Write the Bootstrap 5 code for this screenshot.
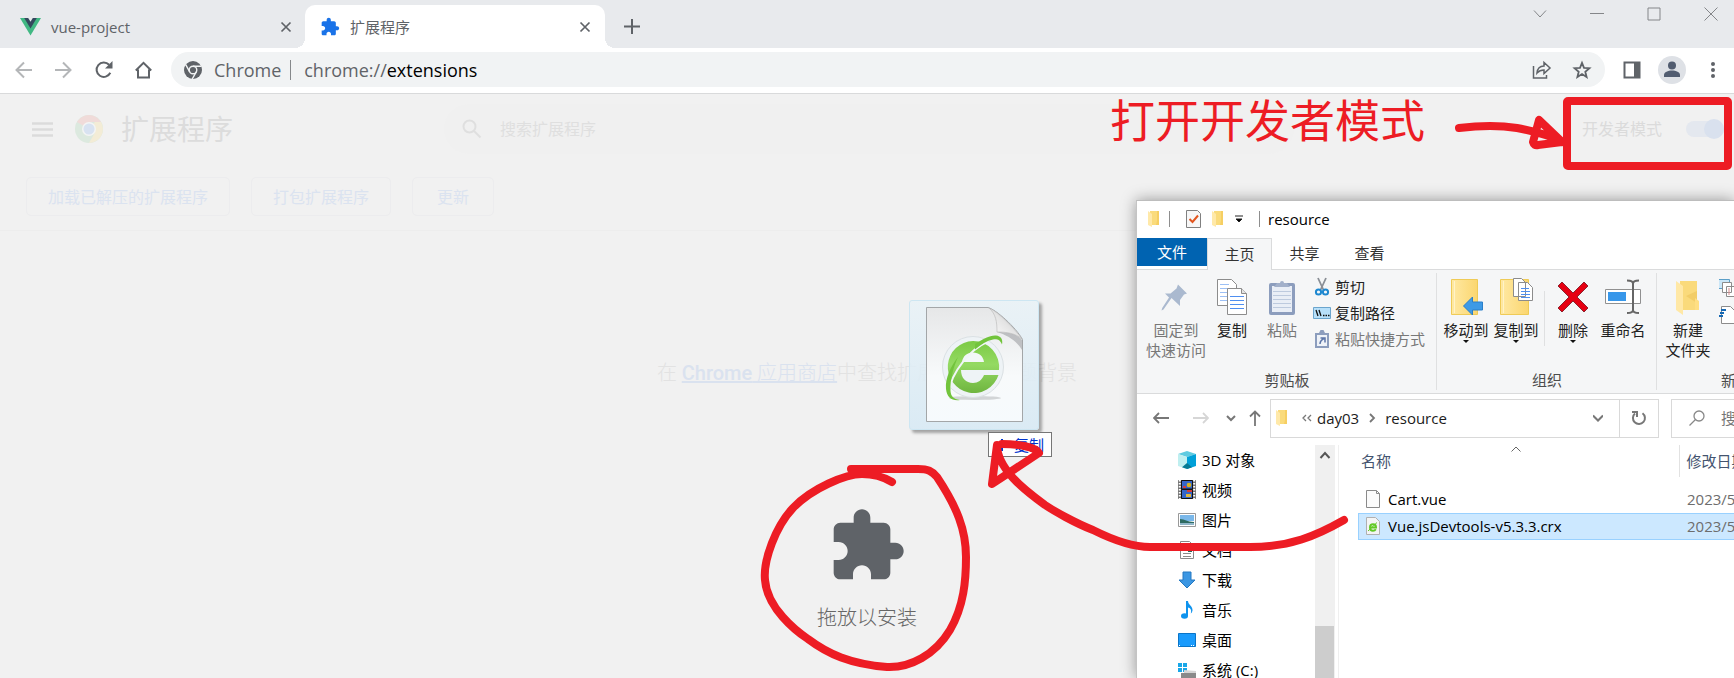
<!DOCTYPE html>
<html lang="zh-CN">
<head>
<meta charset="utf-8">
<meta name="viewport" content="width=device-width, initial-scale=1">
<title>扩展程序</title>
<link href="https://cdn.jsdelivr.net/npm/bootstrap@5.3.0/dist/css/bootstrap.min.css" rel="stylesheet">
<style>
  :root { --ui: "Open Sans", "Noto Sans CJK SC", sans-serif; --red: #ed1c24; }
  body { font-family: var(--ui); font-size: 15px; line-height: 20px; background: #f1f1f1; color: #000; }
  svg { display: block; flex: none; }
  button { font: inherit; }
  .plain { background: none; border: 0; padding: 0; color: inherit; }

  /* browser frame */
  .tabstrip { height: 48px; background: #e8eaed; color: #5f6368; }
  .tab { height: 43px; padding: 0 20px; gap: 10px; }
  .tab-idle { width: 305px; padding-right: 13px; }
  .tab-on { width: 300px; padding: 0 14px 0 15px; background: #fff; border-radius: 10px 10px 0 0; position: relative; }
  .tab-on::before, .tab-on::after { content: ""; position: absolute; bottom: 0; width: 10px; height: 10px; }
  .tab-on::before { left: -10px; background: radial-gradient(circle at 0 0, transparent 10px, #fff 10px); }
  .tab-on::after { right: -10px; background: radial-gradient(circle at 100% 0, transparent 10px, #fff 10px); }
  .newtab { margin-left: 19px; height: 43px; }
  .winbtns { height: 28px; gap: 43px; padding-right: 16px; color: #848689; }
  .toolbar { height: 46px; background: #fff; border-bottom: 1px solid #d9dadb; color: #5f6368; padding: 0 14px 2px; }
  .omnibox { height: 35px; border-radius: 18px; background: #f1f3f4; font-size: 18px; padding: 0 13px; margin: 0 17px; }
  .omnibox .url { width: 100%; min-width: 0; font-size: 18px; }
  .omnibar { width: 1px; height: 20px; background: #85888b; margin: 0 9px; }
  .avatar { width: 28px; height: 28px; border-radius: 50%; background: #dee1e6; color: #515c70; }

  /* extensions page, dimmed while a file is dragged over it */
  .ext-head { height: 70px; color: #dcdcdc; }
  .ext-side { flex: 1 1 0; }
  .ext-head h1 { font-size: 28px; line-height: 36px; font-weight: 400; margin: 0 0 0 18px; }
  .ext-logo { margin-left: 22px; }
  .ext-search { width: 850px; height: 50px; border-radius: 25px; background: #f0f0f0; padding-left: 18px; color: #dfdfdf; margin-right: 10px; }
  .ext-search input { background: none; border: 0; color: #dfdfdf; font-size: 16px; outline: 0; }
  .ext-search input::placeholder { color: #dfdfdf; opacity: 1; }
  .dev { font-size: 16px; color: #dbdbdb; padding-right: 10px; }
  .dev .form-check-input { width: 38px; height: 16px; margin: 0; border: 0; background: #e4e8ef; position: relative; opacity: 1; }
  .knob { position: relative; }
  .knob::after { content: ""; position: absolute; right: 0; top: 50%; width: 20px; height: 20px; margin-top: -10px; border-radius: 50%; background: #d9e1ee; pointer-events: none; }
  .ext-actions { height: 67px; border-bottom: 1px solid #ededed; padding: 13px 26px; gap: 21px; }
  .ext-actions button { height: 39px; border: 1px solid #ececee; border-radius: 5px; color: #dbe3f0; font-size: 16px; padding: 0 21px; background: none; }
  .ext-actions .narrow { padding: 0 24px; }
  .hint { margin-top: 130px; font: 20px/24px Roboto, "Noto Sans CJK SC", sans-serif; font-weight: 300; color: #e2e2e2; }
  .hint a { color: #dae2ef; }
  .hint b { font-weight: 500; }
  .drop-icon { margin-top: 121px; color: #5f6368; }
  .drop-label { margin-top: 20px; font-size: 20px; line-height: 24px; font-weight: 300; color: #666; }

  /* file window */
  .explorer { position: absolute; top: 200px; right: 0; bottom: 0; width: 598px; background: #fff; border-left: 1px solid #c4c4c4; border-top: 1px solid #bdbdbd; box-shadow: 0 0 14px rgba(0,0,0,.38); overflow: hidden; }
  .ex-title { height: 38px; padding-left: 10px; }
  .bar { width: 1px; height: 16px; background: #8e8e8e; }
  .ex-tabs { height: 31px; }
  .ex-tabs button { width: 65px; height: 31px; color: #333; position: relative; }
  .ex-tabs .file { width: 70px; height: 28px; background: #0063b1; color: #fff; }
  .ex-tabs .on { background: #f5f6f7; border: 1px solid #dadbdc; border-bottom: 0; height: 32px; z-index: 1; }
  .ribbon { height: 125px; background: #f5f6f7; border: solid #dadbdc; border-width: 1px 0; }
  .rgroup { position: relative; flex: none; padding-top: 1px; }
  .rgroup:not(:last-child)::after { content: ""; position: absolute; right: 0; top: 3px; bottom: 3px; width: 1px; background: #dfe0e1; }
  .rlabel { padding-bottom: 3px; color: #4c4c4c; }
  .big { width: 50px; padding-top: 7px; color: #222; white-space: nowrap; display: flex; flex-direction: column; align-items: center; }
  .big svg:first-child { margin-bottom: 4px; }
  .wide { width: 62px; }
  .off { color: #787878; }
  .smalls { margin-left: 6px; padding-top: 3px; }
  .small-row { height: 26px; gap: 4px; display: flex; align-items: center; color: #222; white-space: nowrap; }
  .small-row.off { color: #787878; }
  .midbar { width: 1px; height: 55px; margin: 20px 3px 0; background: #dfe0e1; }
  .ex-nav { height: 51px; padding: 0 0 2px 16px; color: #777; }
  .crumbs { width: 389px; height: 39px; border: 1px solid #d9d9d9; color: #1b1b1b; flex: none; margin: 0 12px 0 9px; }
  .refresh { width: 39px; height: 37px; border-left: 1px solid #d9d9d9; color: #777; }
  .find { width: 130px; height: 39px; border: 1px solid #d9d9d9; color: #777; padding-left: 17px; flex: none; }
  .find input { border: 0; width: 90px; padding: 0; background: none; outline: 0; color: #777; }
  .find input::placeholder { color: #777; opacity: 1; }
  .tree { width: 178px; flex: none; overflow: hidden; }
  .tree a { height: 30px; padding-left: 41px; gap: 6px; color: #000; text-decoration: none; white-space: nowrap; }
  .scroller { width: 20px; background: #f0f0f0; flex: none; }
  .scroller .thumb { height: 52px; width: 19px; background: #cdcdcd; }
  .files { position: relative; border-left: 1px solid #efefef; margin-left: 3px; padding-left: 19px; overflow: hidden; }
  .files table { width: 480px; table-layout: fixed; border-collapse: collapse; }
  .files th { font-weight: 400; color: #44546f; height: 32px; padding: 0 0 0 3px; vertical-align: middle; position: relative; }
  .files th + th { border-left: 1px solid #e2e2e2; padding-left: 7px; }
  .files td { height: 27px; padding: 0 0 0 8px; white-space: nowrap; vertical-align: middle; color: #6d6d6d; }
  .files td:first-child { color: #000; }
  .files .sel { background: #cce8ff; outline: 1px solid #99d1ff; outline-offset: -1px; }
  .files .gap-row td { height: 9px; padding: 0; }
  .sort { position: absolute; top: 0; left: 171px; color: #666; }

  /* dragged item and hand-drawn notes */
  .ghost { position: absolute; left: 909px; top: 300px; width: 130px; height: 130px; background: linear-gradient(rgba(232,242,247,.8), rgba(216,234,245,.9)); border: 1px solid #cde6f2; border-radius: 3px; box-shadow: 3px 3px 3px rgba(0,0,0,.32); }
  .tip { position: absolute; left: 988px; top: 432px; width: 64px; height: 25px; border: 1px solid #767676; background: #fff; color: #0033cc; gap: 6px; }
  .note { position: absolute; top: 91px; right: 309px; font-size: 45px; line-height: 60px; color: var(--red); white-space: nowrap; }
  .ink { position: absolute; inset: 0 auto auto 0; width: 100%; height: auto; pointer-events: none; fill: none; stroke: var(--red); stroke-width: 8; stroke-linecap: round; stroke-linejoin: round; }
</style>
</head>
<body class="vh-100 overflow-hidden position-relative d-flex flex-column">

<svg width="0" height="0" class="position-absolute" aria-hidden="true">
  <defs>
    <linearGradient id="gfold" x1="0" x2="1"><stop offset="0" stop-color="#ffe9a4"/><stop offset="1" stop-color="#fbd66f"/></linearGradient>
    <linearGradient id="ggreen" x1="0" x2="0" y1="0" y2="1"><stop offset="0" stop-color="#7cca45"/><stop offset=".45" stop-color="#94da62"/><stop offset="1" stop-color="#6fb540"/></linearGradient>
    <linearGradient id="gpage" x1="0" x2="0" y1="0" y2="1"><stop offset="0" stop-color="#e6e7e8"/><stop offset=".6" stop-color="#f8fafb"/><stop offset="1" stop-color="#f6fafd"/></linearGradient>
    <linearGradient id="gcurl" x1="0" y1="1" x2="1" y2="0"><stop offset="0" stop-color="#fff"/><stop offset=".5" stop-color="#e4e4e4"/><stop offset="1" stop-color="#9a9a9a"/></linearGradient>
  </defs>
  <symbol id="puzzle" viewBox="0 0 24 24"><path fill="currentColor" d="M20.5 11H19V7c0-1.1-.9-2-2-2h-4V3.5C13 2.12 11.88 1 10.5 1S8 2.12 8 3.5V5H4c-1.1 0-1.99.9-1.99 2v3.8H3.5c1.49 0 2.7 1.21 2.7 2.7s-1.21 2.7-2.7 2.7H2V20c0 1.1.9 2 2 2h3.8v-1.5c0-1.49 1.21-2.7 2.7-2.7s2.7 1.21 2.7 2.7V22H17c1.1 0 2-.9 2-2v-4h1.5c1.38 0 2.5-1.12 2.5-2.5S21.88 11 20.5 11z"/></symbol>
  <symbol id="cross" viewBox="0 0 12 12"><path d="M1.5 1.5l9 9M10.5 1.5l-9 9" stroke="currentColor" stroke-width="1.7"/></symbol>
  <symbol id="folder" viewBox="0 0 14 18"><path fill="#fadb7c" d="M3 1h9v14H3z"/><path fill="#ffe9a9" d="M1 1l4 3v13l-4-2z"/><path fill="#f6cf63" d="M10 1h2v14h-3l1-4z"/></symbol>
  <symbol id="sheets" viewBox="0 0 32 38"><path fill="#fff" stroke="#8c8c8c" d="M1.500 1.500h14l5 5v21h-19z"/><path stroke="#9dc0f5" d="M4 6.500h9M4 10.500h12M4 14.500h12M4 18.500h12M4 22.500h12"/><path fill="#fff" stroke="#8c8c8c" d="M11.500 10.500h14l5 5v21h-19z"/><path fill="#e4e4e4" stroke="#8c8c8c" d="M25.500 10.500v5h5"/><path stroke="#4f8ff0" d="M14 18.500h14M14 22.500h14M14 26.500h14M14 30.500h14"/></symbol>
  <symbol id="caret" viewBox="0 0 6 3"><path fill="#111" d="M0 0h6L3 3z"/></symbol>
</svg>

<header>
  <div class="tabstrip d-flex align-items-end">
    <div class="tab tab-idle d-flex align-items-center">
      <svg width="21" height="19" viewBox="0 0 21 19"><path fill="#41b883" d="M0 1h21L10.500 18.500z"/><path fill="#34495e" d="M4.200 1h12.600L10.500 11.500z"/><path fill="#e8eaed" d="M8.200 1h4.600L10.500 4.800z"/></svg>
      <span class="flex-grow-1">vue-project</span>
      <button class="plain" aria-label="关闭 vue-project"><svg width="12" height="12"><use href="#cross"/></svg></button>
    </div>
    <div class="tab tab-on d-flex align-items-center">
      <svg width="20" height="20" color="#1a73e8"><use href="#puzzle"/></svg>
      <span class="flex-grow-1">扩展程序</span>
      <button class="plain" aria-label="关闭 扩展程序"><svg width="12" height="12"><use href="#cross"/></svg></button>
    </div>
    <button class="plain newtab" aria-label="新标签页"><svg width="16" height="16" viewBox="0 0 16 16"><path d="M8 0v15M0 7.500h16" stroke="#5f6368" stroke-width="2"/></svg></button>
    <div class="winbtns d-flex align-items-center ms-auto align-self-start">
      <button class="plain" aria-label="搜索标签页"><svg width="14" height="14" viewBox="0 0 14 14"><path d="M1 3.500l6 6.500 6-6.500" fill="none" stroke="currentColor"/></svg></button>
      <button class="plain" aria-label="最小化"><svg width="14" height="14"><path d="M0 6.500h14" stroke="currentColor"/></svg></button>
      <button class="plain" aria-label="最大化"><svg width="14" height="14"><path d="M1 1h12v12H1z" fill="none" stroke="currentColor"/></svg></button>
      <button class="plain" aria-label="关闭"><svg width="14" height="14"><path d="M.5.5l13 13M13.500.5l-13 13" stroke="currentColor"/></svg></button>
    </div>
  </div>

  <div class="toolbar d-flex align-items-center">
    <button class="plain" aria-label="后退"><svg width="20" height="20" viewBox="0 0 20 20" fill="none" stroke="#b4b6b8" stroke-width="2"><path d="M18 10H3M10 2.500L2.500 10l7.500 7.500"/></svg></button>
    <button class="plain ms-3 ps-1" aria-label="前进"><svg width="20" height="20" viewBox="0 0 20 20" fill="none" stroke="#b4b6b8" stroke-width="2"><path d="M1 10h15M9 2.500l7.500 7.500L9 17.500"/></svg></button>
    <button class="plain ms-3 ps-1" aria-label="重新加载"><svg width="20" height="20" viewBox="0 0 20 20"><path d="M16.300 12.800a7.200 7.200 0 1 1-1.200-8" fill="none" stroke="#5f6368" stroke-width="2"/><path d="M18.500 1v7.500H11z" fill="#5f6368"/></svg></button>
    <button class="plain ms-3 ps-1" aria-label="主页"><svg width="20" height="20" viewBox="0 0 20 20"><path d="M1.800 10.500L9.500 2.800l7.700 7.700M4 9.500V17.500h11V9.500" fill="none" stroke="#5f6368" stroke-width="2"/></svg></button>
    <div class="omnibox d-flex align-items-center flex-grow-1">
      <svg width="18" height="18" viewBox="0 0 18 18"><circle cx="9" cy="9" r="9" fill="#5f6368"/><circle cx="9" cy="9" r="3.800" fill="none" stroke="#f1f3f4" stroke-width="1.400"/><path d="M9 5.200h8.500M5.700 10.900L1.700 3.600M12.300 10.900L8.200 18" stroke="#f1f3f4" stroke-width="1.400"/></svg>
      <span class="ms-2 ps-1">Chrome</span>
      <span class="omnibar"></span>
      <div class="url flex-grow-1 ps-1">chrome://<span class="text-black">extensions</span></div>
      <button class="plain" aria-label="分享"><svg width="20" height="20" viewBox="0 0 20 20" fill="none" stroke="#5f6368" stroke-width="1.500"><path d="M1.500 6v12h13v-3M5 13c.5-5 3.500-7 7-7V2.500L18 8l-6 5.500V10c-3 0-5 .8-7 3z"/></svg></button>
      <button class="plain ms-3 ps-1" aria-label="收藏"><svg width="20" height="20" viewBox="0 0 20 20"><path fill="none" stroke="#5f6368" stroke-width="1.800" d="M10 2.800l2 5 5.400.4-4.100 3.500 1.300 5.300-4.600-2.900L5.400 17l1.300-5.300-4.100-3.500L8 7.800z"/></svg></button>
    </div>
    <button class="plain" aria-label="侧边栏"><svg width="20" height="20" viewBox="0 0 20 20"><path d="M2.500 2.500h15v15h-15z" fill="none" stroke="#5f6368" stroke-width="2"/><path fill="#5f6368" d="M12 2h6v16h-6z"/></svg></button>
    <button class="plain avatar ms-3 d-flex align-items-center justify-content-center" aria-label="个人资料"><svg width="16" height="17" viewBox="0 0 16 17" fill="currentColor"><circle cx="8" cy="4.500" r="4"/><path d="M0 16v-2c0-3 4-4.500 8-4.500s8 1.500 8 4.500v2z"/></svg></button>
    <button class="plain ms-3 ps-1" aria-label="菜单"><svg width="14" height="18" viewBox="0 0 14 18" fill="#5f6368"><circle cx="7" cy="3" r="2"/><circle cx="7" cy="9" r="2"/><circle cx="7" cy="15" r="2"/></svg></button>
  </div>
</header>

<main class="flex-grow-1">
  <div class="ext-head d-flex align-items-center">
    <div class="ext-side d-flex align-items-center ps-4">
      <button class="plain ms-2" aria-label="主菜单"><svg width="21" height="15" viewBox="0 0 21 15"><path d="M0 1.500h21M0 7.500h21M0 13.500h21" stroke="#dbdbdb" stroke-width="2.400"/></svg></button>
      <svg class="ext-logo" width="28" height="28" viewBox="0 0 28 28"><circle cx="14" cy="14" r="14" fill="#dce9df"/><path fill="#f0dbd9" d="M14 14L1.900 7A14 14 0 0 1 26.100 7L14 7z"/><path fill="#f3ecd6" d="M14 14l6-7h6.100A14 14 0 0 1 14 28l6-10.500z"/><circle cx="14" cy="14" r="7" fill="#f3f4f4"/><circle cx="14" cy="14" r="5.500" fill="#d8e2f1"/></svg>
      <h1>扩展程序</h1>
    </div>
    <label class="ext-search d-flex align-items-center">
      <svg width="20" height="20" viewBox="0 0 20 20" fill="none" stroke="currentColor" stroke-width="2"><circle cx="7.500" cy="7.500" r="6"/><path d="M12 12l6.500 6.500"/></svg>
      <input class="ms-3 w-50" type="search" placeholder="搜索扩展程序" aria-label="搜索扩展程序">
    </label>
    <div class="ext-side dev d-flex align-items-center justify-content-end">
      <label for="devmode" class="me-4">开发者模式</label>
      <span class="knob d-flex form-switch p-0"><input class="form-check-input" type="checkbox" role="switch" id="devmode"></span>
    </div>
  </div>
  <div class="ext-actions d-flex">
    <button type="button">加载已解压的扩展程序</button>
    <button type="button">打包扩展程序</button>
    <button type="button" class="narrow">更新</button>
  </div>
  <section class="d-flex flex-column align-items-center">
    <p class="hint mb-0">在 <a href="#"><b>Chrome</b> 应用商店</a>中查找扩展程序和主题背景</p>
    <svg class="drop-icon" width="80" height="80"><use href="#puzzle"/></svg>
    <p class="drop-label mb-0">拖放以安装</p>
  </section>
</main>

<section class="explorer d-flex flex-column" aria-label="resource">
  <div class="ex-title d-flex align-items-center">
    <svg width="14" height="18"><use href="#folder"/></svg>
    <span class="bar ms-2 me-3"></span>
    <svg width="15" height="18" viewBox="0 0 15 18"><path d="M.5.500h11l3 3v14H.5z" fill="#f7f7f7" stroke="#808080"/><path d="M3.500 9l3 3L12 5.500" fill="none" stroke="#e2561f" stroke-width="2"/></svg>
    <svg class="ms-2 me-2" width="18" height="18"><use href="#folder"/></svg>
    <svg class="me-3" width="8" height="8" viewBox="0 0 8 8"><path d="M0 1h8M1 4h6L4 7z" stroke="#222" stroke-width="1"/></svg>
    <span class="bar me-2"></span>
    <span>resource</span>
  </div>
  <div class="ex-tabs d-flex">
    <button class="plain file">文件</button>
    <button class="plain on">主页</button>
    <button class="plain">共享</button>
    <button class="plain">查看</button>
  </div>
  <div class="ribbon d-flex flex-shrink-0">
    <div class="rgroup d-flex flex-column" style="width:300px">
      <div class="d-flex ps-2">
        <button class="plain big wide off"><svg width="32" height="38" viewBox="0 0 32 38"><path fill="#aab9cf" d="M18 6.500l9 9-3 1-4 5.500v6L11.500 20 3.500 31.500l-2 1 .7-2.500L9 19.500l-4-4h5.500l6-5z"/></svg>固定到<br>快速访问</button>
        <button class="plain big"><svg width="32" height="38"><use href="#sheets"/></svg>复制</button>
        <button class="plain big off"><svg width="28" height="38" viewBox="0 0 28 38"><rect x="1" y="5" width="26" height="32" rx="2" fill="#8c9dbd"/><path fill="#e9eef6" d="M4 8h20v26H4z"/><path stroke="#bdcade" d="M5 13.500h18M5 17.500h18M5 21.500h18M5 25.500h18M5 29.500h18"/><path fill="#a2b0ca" d="M6 9l3-4h3a2 2 0 0 1 4 0h3l3 4z"/></svg>粘贴</button>
        <div class="smalls">
          <button class="plain small-row"><svg width="18" height="20" viewBox="0 0 18 20" fill="none"><path stroke="#8a8f96" stroke-width="1.800" d="M5 1l5.500 12M13 1L7.500 13"/><circle cx="5.500" cy="15" r="2.600" stroke="#1e88d0" stroke-width="2"/><circle cx="12.500" cy="15" r="2.600" stroke="#1e88d0" stroke-width="2"/></svg>剪切</button>
          <button class="plain small-row"><svg width="18" height="12" viewBox="0 0 18 12"><path fill="#b7e0fa" stroke="#6ba5cd" d="M.5.500h17v11H.5z"/><path stroke="#111" stroke-width="1.300" d="M3 3l2 6M6 3l2 6M10 8.500h1.500M12.500 8.500H14M15 8.500h1.500"/></svg>复制路径</button>
          <button class="plain small-row off"><svg width="18" height="20" viewBox="0 0 18 20"><path fill="#8c9dbd" d="M2 4h4l1.500-3h3L12 4h4v15H2z"/><path fill="#eef2f8" d="M4 6h10v11H4z"/><path stroke="#5d76a8" stroke-width="1.500" fill="none" d="M7 15c0-3 1-4 4-5.500M7.500 9H12v4.500"/></svg>粘贴快捷方式</button>
        </div>
      </div>
      <div class="rlabel mt-auto text-center">剪贴板</div>
    </div>
    <div class="rgroup d-flex flex-column" style="width:220px">
      <div class="d-flex ps-1">
        <button class="plain big"><svg width="34" height="38" viewBox="0 0 34 38"><path fill="url(#gfold)" stroke="#efcb57" d="M2.500 1.500h26v35h-26z"/><path stroke="#fff3c8" d="M5.500 3v32"/><path fill="#3e9ae6" stroke="#2a7fc9" d="M14.500 28l9-9v5h10v8h-10v5z"/></svg>移动到<svg width="6" height="3"><use href="#caret"/></svg></button>
        <button class="plain big"><svg width="34" height="38" viewBox="0 0 34 38"><path fill="url(#gfold)" stroke="#efcb57" d="M1.500 1.500h28v35h-28z"/><path stroke="#fff3c8" d="M4.500 3v32"/><path fill="#fff" stroke="#8c8c8c" d="M14.500.500h8l4 4v14h-12zM19.500 4.500h9l5 5v13h-14z"/><path stroke="#4f8ff0" d="M22 10.500h8M22 13.500h9M22 16.500h9M22 19.500h9"/></svg>复制到<svg width="6" height="3"><use href="#caret"/></svg></button>
        <span class="midbar"></span>
        <button class="plain big"><svg width="34" height="38" viewBox="0 0 34 38"><path fill="#e60012" stroke="#8d2530" d="M2 8l4-4 11 11L28 4l4 4-11 11 11 11-4 4-11-11L6 34l-4-4 11-11z"/></svg>删除<svg width="6" height="3"><use href="#caret"/></svg></button>
        <button class="plain big"><svg width="36" height="38" viewBox="0 0 36 38"><path fill="#fff" stroke="#909090" d="M.5 11.500h35v14H.5z"/><path fill="#3797ea" d="M3 14h18v9H3z"/><path fill="none" stroke="#666" stroke-width="2" d="M22 2.500c4 0 6 1 6 3 0-2 2-3 6-3M28 5v27M22 35c4 0 6-1 6-3 0 2 2 3 6 3"/></svg>重命名</button>
      </div>
      <div class="rlabel mt-auto text-center">组织</div>
    </div>
    <div class="rgroup d-flex flex-column" style="width:158px">
      <div class="d-flex">
        <button class="plain big wide"><svg width="28" height="38" viewBox="0 0 28 38"><path fill="#fada7b" d="M6 3h17v29H6z"/><path fill="#ffe8a6" d="M2 3l7 5v29l-7-5z"/><path fill="#e9bf55" d="M12 18l11-5v12z" opacity=".5"/><path fill="#ffdf83" d="M21 20l4 3v9h-4z"/></svg>新建<br>文件夹</button>
        <div class="d-flex flex-column gap-2 pt-2">
          <button class="plain" aria-label="新建项目"><svg width="20" height="18" viewBox="3 0 20 18"><path fill="#cbe7f8" stroke="#5b9fc8" d="M1.500.5h12v9h-12z"/><path fill="#fff" stroke="#8c8c8c" d="M6.500 3.500h9v10h-9zM10.500 7.500h8v10h-8z"/><path stroke="#d98b8b" d="M13 9v7"/></svg></button>
          <button class="plain" aria-label="轻松访问"><svg width="20" height="20" viewBox="3 0 20 20"><path fill="#fff" stroke="#8c8c8c" d="M5.500 1.500h9l4 4v13h-13z"/><path stroke="#1668b3" stroke-width="2" d="M5 5h5M4 8h4M3 11h4"/></svg></button>
        </div>
      </div>
      <div class="rlabel mt-auto text-center">新建</div>
    </div>
  </div>

  <div class="ex-nav d-flex align-items-center flex-shrink-0">
    <button class="plain" aria-label="返回"><svg width="16" height="16" viewBox="0 0 16 16" fill="none" stroke="#777" stroke-width="1.800"><path d="M16 8H1M6 3L1 8l5 5"/></svg></button>
    <button class="plain ms-4" aria-label="前进"><svg width="16" height="16" viewBox="0 0 16 16" fill="none" stroke="#d6d6d6" stroke-width="1.800"><path d="M0 8h15M10 3l5 5-5 5"/></svg></button>
    <button class="plain ms-3" aria-label="最近浏览的位置"><svg width="12" height="10" viewBox="2 0 12 10" fill="none" stroke="#777" stroke-width="2"><path d="M4 3l4 4 4-4"/></svg></button>
    <button class="plain ms-2 ps-1" aria-label="向上"><svg width="12" height="16" viewBox="0 0 12 16" fill="none" stroke="#777" stroke-width="1.800"><path d="M6 16V1M1 6.500l5-5 5 5"/></svg></button>
    <div class="crumbs d-flex align-items-center">
      <svg class="ms-1" width="14" height="18"><use href="#folder"/></svg>
      <svg class="ms-2 ps-1" width="16" height="8" viewBox="0 0 12 8" fill="none" stroke="#777" stroke-width="1.300"><path d="M5 1L2 4l3 3M10 1L7 4l3 3"/></svg>
      <span class="ms-1">day03</span>
      <svg class="mx-2" width="10" height="10" viewBox="0 0 10 10" fill="none" stroke="#777" stroke-width="1.800"><path d="M3 1l4 4-4 4"/></svg>
      <span>resource</span>
      <button class="plain ms-auto me-3" aria-label="以前的位置"><svg width="10" height="8" viewBox="0 0 10 8" fill="none" stroke="#777" stroke-width="2"><path d="M0 1.500l5 5 5-5"/></svg></button>
      <button class="plain refresh d-flex align-items-center justify-content-center" aria-label="刷新"><svg width="16" height="16" viewBox="0 0 16 16" fill="none" stroke="#777" stroke-width="2"><path d="M11.500 3.200A6 6 0 1 1 4 3.500M1 2h5v5"/></svg></button>
    </div>
    <label class="find d-flex align-items-center">
      <svg class="me-3" width="16" height="16" viewBox="0 0 16 16" fill="none" stroke="#888" stroke-width="1.300"><circle cx="10" cy="6" r="5"/><path d="M6.500 9.500L.5 15.500"/></svg>
      <input type="text" placeholder="搜索resource" aria-label="搜索">
    </label>
  </div>

  <div class="d-flex flex-grow-1 overflow-hidden">
    <nav class="tree" aria-label="位置">
      <a href="#" class="d-flex align-items-center"><svg width="18" height="18" viewBox="0 0 18 18"><path fill="#5fcbe0" d="M9 0l9 3-9 3-9-3z"/><path fill="#bfeff0" d="M0 3l9 3v12l-9-3z"/><path fill="#00a0d8" d="M18 3L9 6v12l9-3z"/><path fill="#067a94" d="M9 12l5 4.300L9 18l-5-1.700z"/></svg>3D 对象</a>
      <a href="#" class="d-flex align-items-center"><svg width="18" height="19" viewBox="0 0 18 19"><path fill="#777" d="M0 0h18v19H0z"/><path stroke="#fff" stroke-width="2" stroke-dasharray="1.500 1.500" d="M1.800 0v19M16.200 0v19"/><path fill="#3566c8" stroke="#111" d="M3.500.5h11v8.500h-11zM3.500 9.500h11v9h-11z"/><circle cx="11" cy="5" r="2.300" fill="#d8b41c"/><path fill="#d23d3a" d="M5 6h3v2H5zM9 10h5v2H9z"/><path fill="#e0b83a" d="M8 14h5v3H8z"/></svg>视频</a>
      <a href="#" class="d-flex align-items-center"><svg width="18" height="14" viewBox="0 0 18 14"><path fill="#fff" stroke="#999" d="M.5.500h17v13H.5z"/><path fill="#7ab8ea" d="M2 2h14v6H2z"/><path fill="#2e6b62" d="M2 6c5 0 7 3 14 3v1H2z"/><path fill="#8fb6c9" d="M2 10h14v2H2z"/></svg>图片</a>
      <a href="#" class="d-flex align-items-center"><svg width="18" height="18" viewBox="0 0 18 18"><path fill="#fff" stroke="#8a8a8a" d="M2.500.5h9l4 4v13h-13z"/><path stroke="#8a8a8a" d="M5 6.500h8M5 9.500h8M5 12.500h8M5 15.500h8"/><path fill="#276a5d" d="M10 9h4v2h-4z"/></svg>文档</a>
      <a href="#" class="d-flex align-items-center"><svg width="18" height="18" viewBox="0 0 18 18"><path fill="#3c97e3" stroke="#2479c2" d="M5 1h8v8h4l-8 8-8-8h4z"/></svg>下载</a>
      <a href="#" class="d-flex align-items-center"><svg width="18" height="18" viewBox="0 0 18 18"><ellipse cx="6.500" cy="15" rx="3.500" ry="2.800" fill="#0e93ee"/><path fill="#0e93ee" d="M8 0h2c0 4 5 5 4.500 9.500-.3 1.500-1 2.500-1.700 3 1.200-4-.8-5.500-2.800-6V15H8z"/></svg>音乐</a>
      <a href="#" class="d-flex align-items-center"><svg width="18" height="14" viewBox="0 0 18 14"><path fill="#1a9bfc" stroke="#0a75c8" d="M.5.500h17v13H.5z"/><path stroke="#fff" d="M1 12.500h2M13 12.500h3" stroke-dasharray="1 1"/></svg>桌面</a>
      <a href="#" class="d-flex align-items-center"><svg width="18" height="18" viewBox="0 0 18 18"><path fill="#18a7e8" d="M0 2h4v4H0zM5 2h4v4H5zM0 7h4v4H0zM5 7h4v4H5z"/><path fill="#d6d6d6" d="M6 9l12 1v3L6 13z"/><path fill="#8a8a8a" d="M3 12h15v5H3z"/></svg>系统 (C:)</a>
    </nav>
    <div class="scroller d-flex flex-column">
      <svg class="mx-auto mt-1" width="12" height="12" viewBox="0 0 12 12" fill="none" stroke="#555" stroke-width="2"><path d="M1.500 9L6 4l4.500 5"/></svg>
      <div class="thumb mt-auto"></div>
    </div>
    <div class="files flex-grow-1">
      <svg class="sort" width="12" height="8" viewBox="0 0 12 8" fill="none" stroke="currentColor"><path d="M1.500 6.500L6 2l4.500 4.500"/></svg>
      <table>
        <colgroup><col style="width:321px"><col></colgroup>
        <thead><tr><th scope="col">名称</th><th scope="col">修改日期</th></tr></thead>
        <tbody>
          <tr class="gap-row"><td colspan="2"></td></tr>
          <tr>
            <td><span class="d-flex align-items-center gap-2"><svg width="14" height="18" viewBox="0 0 14 18"><path fill="#fbfbfb" stroke="#8a8a8a" d="M.5.500h10l3 3v14H.5z"/><path fill="none" stroke="#8a8a8a" d="M10.500.5v3h3"/></svg>Cart.vue</span></td>
            <td>2023/5/10 10:21</td>
          </tr>
          <tr class="sel">
            <td><span class="d-flex align-items-center gap-2"><svg width="14" height="18" viewBox="0 0 14 18"><path fill="#f4f4f4" stroke="#b0b0b0" d="M.5.500h9l4 4v13H.5z"/><path fill="none" stroke="#62c925" stroke-width="2" d="M4 10.500h6c0-2-1-3.200-3-3.200s-3 1.500-3 3.200 1 3.200 3 3.200c1.300 0 2.200-.5 2.800-1.400"/><path stroke="#62c925" d="M2 14L11 5.500"/></svg>Vue.jsDevtools-v5.3.3.crx</span></td>
            <td>2023/5/10 10:21</td>
          </tr>
        </tbody>
      </table>
    </div>
  </div>
</section>

<div class="ghost">
  <svg width="128" height="128" viewBox="1 1 128 128">
    <path fill="url(#gpage)" stroke="#a3a6a8" d="M17.500 7.500H79c8 2 28 20 34.500 32v82h-96z"/>
    <path fill="#8d9093" opacity=".5" d="M88 32c12 0 20 2 25 8v10c-5-9-15-15-25-18z"/>
    <path fill="url(#gcurl)" stroke="#b5b5b5" stroke-width=".6" d="M80 8c7 6 8 14 8 24 9 0 18 1 25 7C106 29 90 12 80 8z"/>
    <ellipse cx="66" cy="98" rx="26" ry="2" fill="#b9bcbe" opacity=".6"/>
    <circle cx="64" cy="67" r="30.500" fill="#eef3f6" stroke="#dbe1e4"/>
    <path fill="url(#ggreen)" d="M64 41a26 26 0 0 1 26 29H52c0 8 5 13 12 13 5 0 9-3 11-8h14.500A26 26 0 1 1 64 41z"/>
    <path fill="#f3f8f8" d="M53 62c1-6 5-9.500 11-9.500S74 56 75 62z"/>
    <path fill="none" stroke="#f1f6f7" stroke-width="2" d="M78 42C62 49 42 72 40 92"/>
    <path fill="#72c43c" d="M66 44c8-5 15-9 21-8.500 5 .5 7 4 6 9-2-5-5-5.500-9-5-6 1-12 5-18 10zM49 57c-7 9-13 21-12 32 1 9 6 12 14 11-7-1-9-4-9.500-9C41 80 44 68 49 57z"/>
  </svg>
</div>
<div class="tip d-flex align-items-center justify-content-center"><svg width="12" height="12" viewBox="0 0 12 12"><path d="M6 0v12M0 6h12" stroke="#0033cc" stroke-width="2"/></svg>复制</div>

<p class="note mb-0">打开开发者模式</p>
<svg class="ink" viewBox="0 0 1734 678" aria-hidden="true">
  <path d="M892 482C882 476 872 474 862 474C846 474 812 488 793 508C776 526 763 560 765 580C767 608 796 631 808 639C828 654 850 664 887 667C910 668 935 655 950 630C964 606 966 580 966 557C966 530 957 507 937 477C932 471 928 469 918 469H851"/>
  <path d="M1344 520C1316 536 1290 547 1250 547H1150C1135 547 1113 540 1093 530C1075 523 1054 511 1045 505C1034 497 1023 489 1013 478C1004 468 997 457 997 445L992 484L1039 453C1036 447 1018 444 1002 444"/>
  <path d="M1459 128C1483 125 1505 126 1517 128C1533 131 1550 135 1562 142L1539 120L1533 142Q1534 146 1538 145L1562 142"/>
  <rect x="1567" y="101" width="161" height="65" rx="1"/>
</svg>

<script src="https://cdn.jsdelivr.net/npm/bootstrap@5.3.0/dist/js/bootstrap.bundle.min.js"></script>
</body>
</html>
